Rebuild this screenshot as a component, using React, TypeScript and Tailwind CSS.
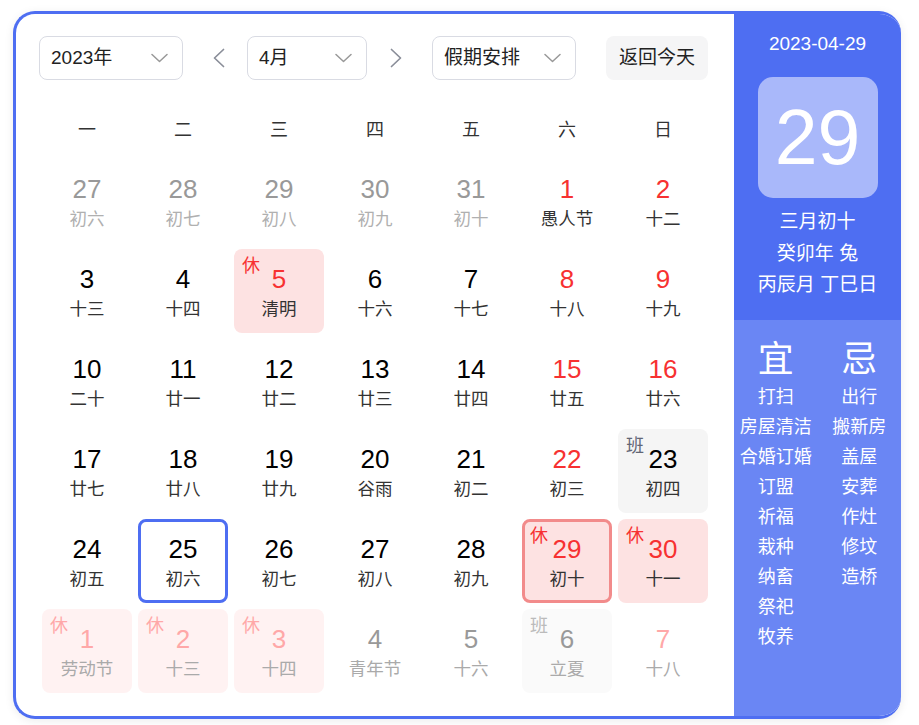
import React from 'react'

type Kind = 'prev' | 'normal' | 'red' | 'rest' | 'work' | 'selected' | 'today' | 'nextRest' | 'next' | 'nextWork' | 'nextRed'

type Day = { d: number; l: string; k: Kind }

const rows: Day[][] = [
  [
    { d: 27, l: '初六', k: 'prev' },
    { d: 28, l: '初七', k: 'prev' },
    { d: 29, l: '初八', k: 'prev' },
    { d: 30, l: '初九', k: 'prev' },
    { d: 31, l: '初十', k: 'prev' },
    { d: 1, l: '愚人节', k: 'red' },
    { d: 2, l: '十二', k: 'red' }
  ],
  [
    { d: 3, l: '十三', k: 'normal' },
    { d: 4, l: '十四', k: 'normal' },
    { d: 5, l: '清明', k: 'rest' },
    { d: 6, l: '十六', k: 'normal' },
    { d: 7, l: '十七', k: 'normal' },
    { d: 8, l: '十八', k: 'red' },
    { d: 9, l: '十九', k: 'red' }
  ],
  [
    { d: 10, l: '二十', k: 'normal' },
    { d: 11, l: '廿一', k: 'normal' },
    { d: 12, l: '廿二', k: 'normal' },
    { d: 13, l: '廿三', k: 'normal' },
    { d: 14, l: '廿四', k: 'normal' },
    { d: 15, l: '廿五', k: 'red' },
    { d: 16, l: '廿六', k: 'red' }
  ],
  [
    { d: 17, l: '廿七', k: 'normal' },
    { d: 18, l: '廿八', k: 'normal' },
    { d: 19, l: '廿九', k: 'normal' },
    { d: 20, l: '谷雨', k: 'normal' },
    { d: 21, l: '初二', k: 'normal' },
    { d: 22, l: '初三', k: 'red' },
    { d: 23, l: '初四', k: 'work' }
  ],
  [
    { d: 24, l: '初五', k: 'normal' },
    { d: 25, l: '初六', k: 'selected' },
    { d: 26, l: '初七', k: 'normal' },
    { d: 27, l: '初八', k: 'normal' },
    { d: 28, l: '初九', k: 'normal' },
    { d: 29, l: '初十', k: 'today' },
    { d: 30, l: '十一', k: 'rest' }
  ],
  [
    { d: 1, l: '劳动节', k: 'nextRest' },
    { d: 2, l: '十三', k: 'nextRest' },
    { d: 3, l: '十四', k: 'nextRest' },
    { d: 4, l: '青年节', k: 'next' },
    { d: 5, l: '十六', k: 'next' },
    { d: 6, l: '立夏', k: 'nextWork' },
    { d: 7, l: '十八', k: 'nextRed' }
  ]
]

const weekdays = ['一', '二', '三', '四', '五', '六', '日']
const good = ['打扫', '房屋清洁', '合婚订婚', '订盟', '祈福', '栽种', '纳畜', '祭祀', '牧养']
const bad = ['出行', '搬新房', '盖屋', '安葬', '作灶', '修坟', '造桥']

const styles: Record<Kind, { box: string; num: string; lunar: string; tag?: string; tagCls?: string }> = {
  prev: { box: 'border-transparent', num: 'text-[#999]', lunar: 'text-[#b0b0b0]' },
  normal: { box: 'border-transparent', num: 'text-black', lunar: 'text-[#333]' },
  red: { box: 'border-transparent', num: 'text-[#f73131]', lunar: 'text-[#333]' },
  rest: { box: 'border-transparent bg-[#fde2e2]', num: 'text-[#f73131]', lunar: 'text-[#333]', tag: '休', tagCls: 'text-[#f73131]' },
  work: { box: 'border-transparent bg-[#f5f5f5]', num: 'text-black', lunar: 'text-[#333]', tag: '班', tagCls: 'text-[#626675]' },
  selected: { box: 'border-[#4e6ef2]', num: 'text-black', lunar: 'text-[#333]' },
  today: { box: 'border-[#f28b8b] bg-[#fde2e2]', num: 'text-[#f73131]', lunar: 'text-[#333]', tag: '休', tagCls: 'text-[#f73131]' },
  nextRest: { box: 'border-transparent bg-[#fff2f2]', num: 'text-[#ffa8a8]', lunar: 'text-[#aaa]', tag: '休', tagCls: 'text-[#ffa8a8]' },
  next: { box: 'border-transparent', num: 'text-[#999]', lunar: 'text-[#aaa]' },
  nextWork: { box: 'border-transparent bg-[#fafafa]', num: 'text-[#999]', lunar: 'text-[#aaa]', tag: '班', tagCls: 'text-[#bbb]' },
  nextRed: { box: 'border-transparent', num: 'text-[#ffa8a8]', lunar: 'text-[#aaa]' }
}

function Chevron({ dir }: { dir: 'left' | 'right' | 'down' }) {
  if (dir === 'down') {
    return (
      <svg width="17" height="10" viewBox="0 0 17 10" fill="none">
        <path d="M1 1.5 L8.5 8.5 L16 1.5" stroke="#999" strokeWidth="1.5" strokeLinecap="round" strokeLinejoin="round" />
      </svg>
    )
  }
  return (
    <svg width="12" height="20" viewBox="0 0 12 20" fill="none">
      <path
        d={dir === 'left' ? 'M10.5 1.5 L1.5 10 L10.5 18.5' : 'M1.5 1.5 L10.5 10 L1.5 18.5'}
        stroke="#8a8e99"
        strokeWidth="1.7"
        strokeLinecap="round"
        strokeLinejoin="round"
      />
    </svg>
  )
}

function Select({ label, width }: { label: string; width: string }) {
  return (
    <div className={`${width} h-[44px] flex items-center justify-between pl-[11px] pr-[14px] border border-[#d9dbe3] rounded-[8px] text-[19px] text-[#222]`}>
      <span>{label}</span>
      <Chevron dir="down" />
    </div>
  )
}

function Cell({ day }: { day: Day }) {
  const s = styles[day.k]
  return (
    <div className={`relative h-[84px] rounded-[8px] border-[3px] flex flex-col items-center pt-[11px] ${s.box}`}>
      {s.tag && (
        <span className={`absolute left-[5px] top-[2px] text-[18px] leading-[24px] ${s.tagCls}`}>{s.tag}</span>
      )}
      <span className={`text-[26px] leading-[32px] ${s.num}`}>{day.d}</span>
      <span className={`text-[17.5px] leading-[28px] ${s.lunar}`}>{day.l}</span>
    </div>
  )
}

export default function App() {
  return (
    <div
      className="min-h-screen bg-white pl-[13px] pt-[11px]"
      style={{ fontFamily: "'Liberation Sans', Arial, 'Noto Sans CJK SC', sans-serif" }}
    >
      <div className="w-[888px] h-[708px] flex border-y-[3px] border-l-[3px] border-[#4e6ef2] rounded-[22px] overflow-hidden bg-white shadow-[0_2px_10px_rgba(0,0,0,0.08)]">
        {/* calendar */}
        <div className="flex-1 pt-[22px]">
          <div className="flex items-center pl-[23px]">
            <Select label="2023年" width="w-[144px]" />
            <div className="w-[64px] flex justify-center pl-[8px]">
              <Chevron dir="left" />
            </div>
            <Select label="4月" width="w-[120px]" />
            <div className="w-[65px] flex justify-center pr-[7px]">
              <Chevron dir="right" />
            </div>
            <Select label="假期安排" width="w-[144px]" />
            <button className="ml-[30px] w-[102px] h-[44px] rounded-[8px] bg-[#f5f5f6] text-[19px] text-[#222]">
              返回今天
            </button>
          </div>

          <div className="ml-[26px] mt-[30px] grid grid-cols-[repeat(7,90px)] gap-x-[6px]">
            {weekdays.map((w) => (
              <div key={w} className="h-[40px] leading-[40px] text-center text-[18px] text-[#333]">
                {w}
              </div>
            ))}
          </div>

          <div className="ml-[26px] mt-[9px] grid grid-cols-[repeat(7,90px)] gap-[6px]">
            {rows.flat().map((day, i) => (
              <Cell key={i} day={day} />
            ))}
          </div>
        </div>

        {/* side panel */}
        <div className="w-[167px] flex flex-col text-white">
          <div className="h-[306px] bg-[#4e6ef2] flex flex-col items-center pt-[18px]">
            <div className="text-[19px] leading-[24px]">2023-04-29</div>
            <div className="mt-[21px] w-[120px] h-[121px] rounded-[15px] bg-[#a9b8fa] flex items-center justify-center text-[77px] leading-none">
              29
            </div>
            <div className="mt-[8px] text-[19px] leading-[31.5px] text-center">
              <div>三月初十</div>
              <div>癸卯年 兔</div>
              <div>丙辰月 丁巳日</div>
            </div>
          </div>
          <div className="flex-1 bg-[#6a86f4] grid grid-cols-2 content-start pt-[18px]">
            <div className="flex flex-col items-center">
              <div className="text-[36px] leading-[44px]">宜</div>
              {good.map((g) => (
                <div key={g} className="text-[18px] leading-[30px]">{g}</div>
              ))}
            </div>
            <div className="flex flex-col items-center">
              <div className="text-[36px] leading-[44px]">忌</div>
              {bad.map((g) => (
                <div key={g} className="text-[18px] leading-[30px]">{g}</div>
              ))}
            </div>
          </div>
        </div>
      </div>
    </div>
  )
}
